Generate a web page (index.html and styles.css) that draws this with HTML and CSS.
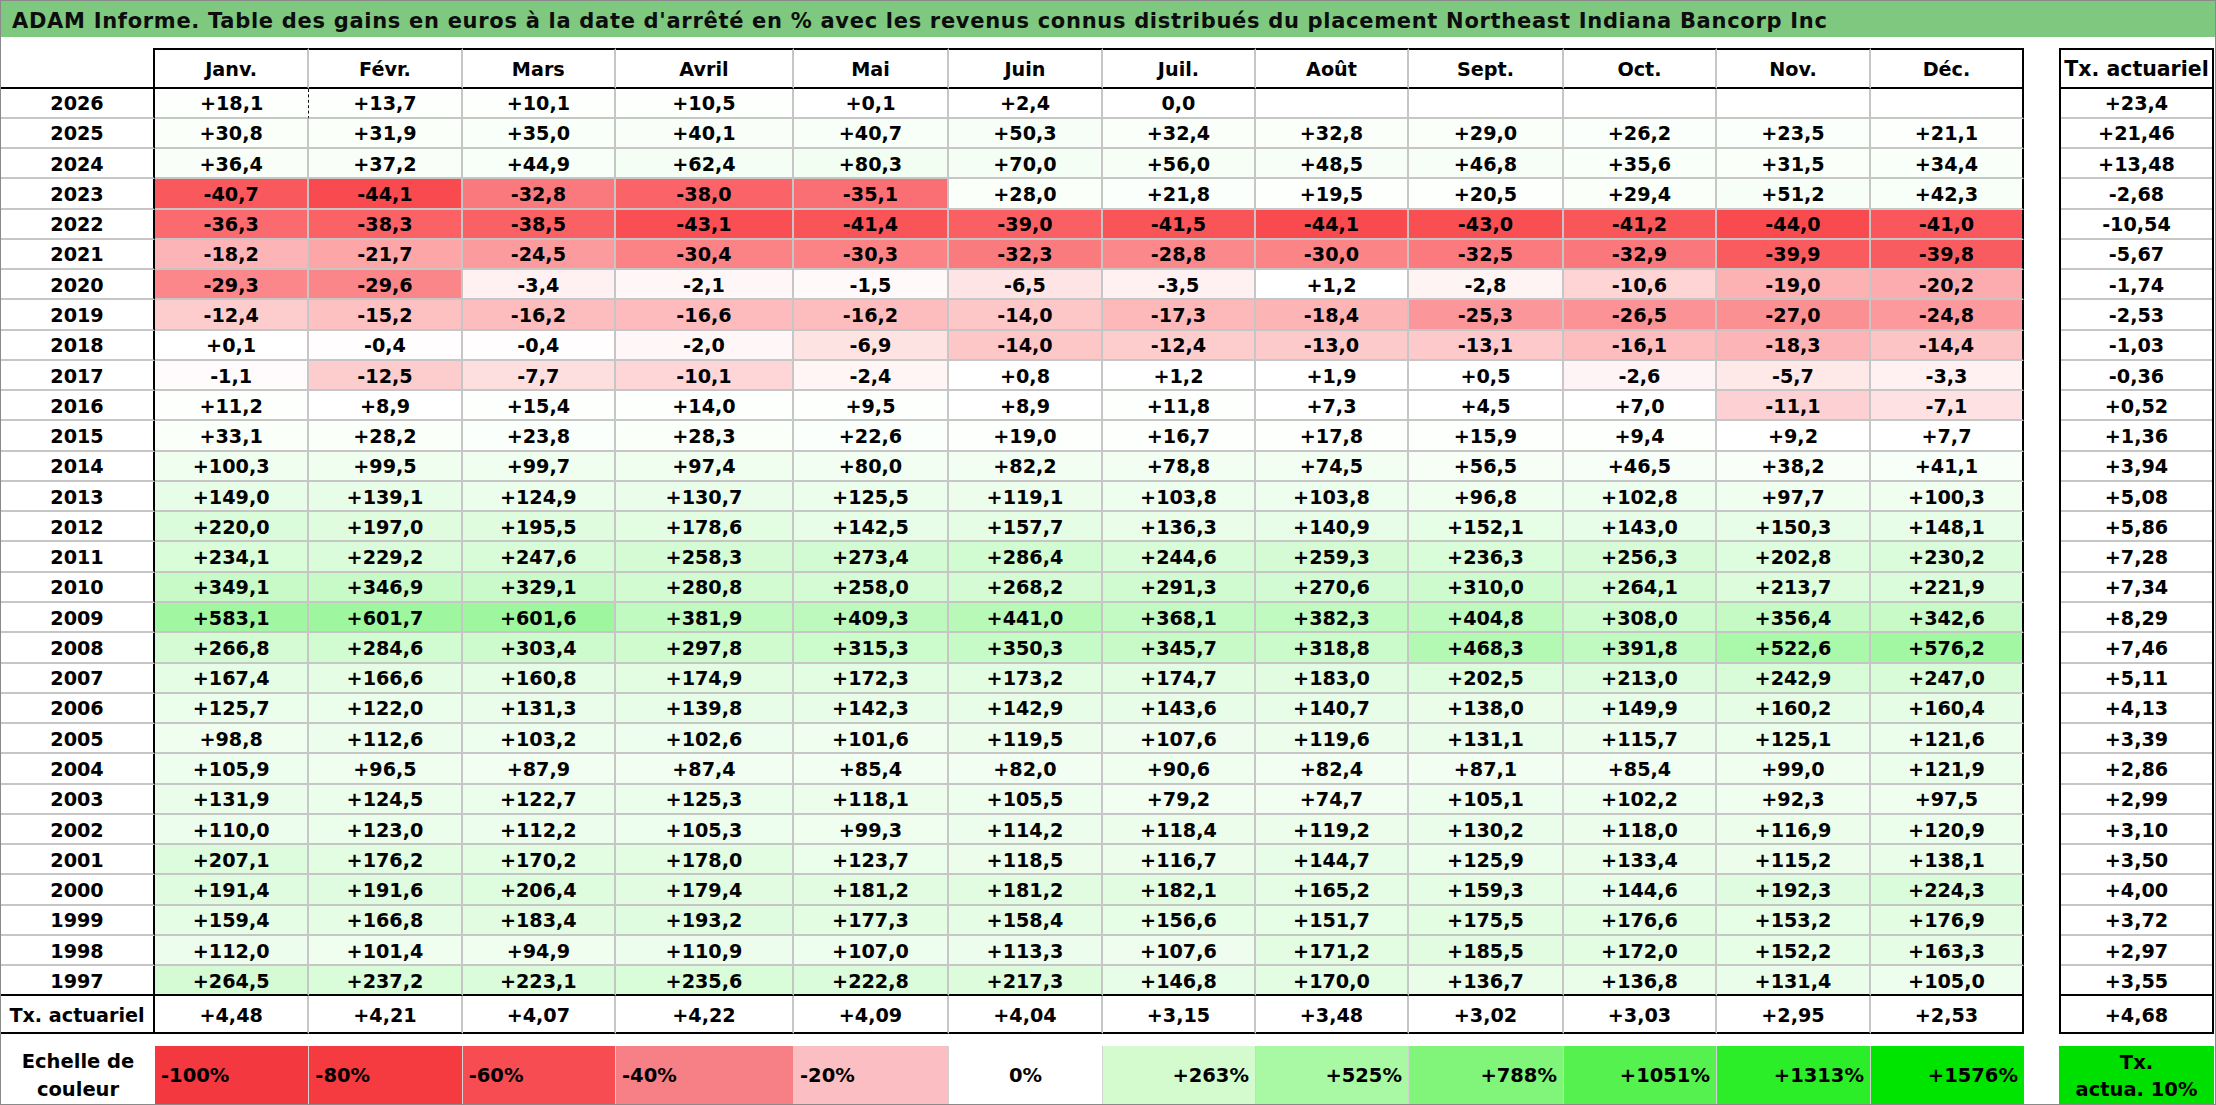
FILE: index.html
```html
<!DOCTYPE html>
<html lang="fr">
<head>
<meta charset="utf-8">
<title>ADAM Informe</title>
<link rel="stylesheet" href="styles.css">
</head>
<body>
<div class="page">
  <div class="title">ADAM Informe. Table des gains en euros à la date d'arrêté en % avec les revenus connus distribués du placement Northeast Indiana Bancorp Inc</div>
  <div class="sheet">
    <div class="main">
      <div class="row head"><div class="lab"></div><div>Janv.</div><div>Févr.</div><div>Mars</div><div>Avril</div><div>Mai</div><div>Juin</div><div>Juil.</div><div>Août</div><div>Sept.</div><div>Oct.</div><div>Nov.</div><div>Déc.</div></div>
      <div class="row"><div class="lab">2026</div><div class="v marq">+18,1</div><div class="v">+13,7</div><div class="v">+10,1</div><div class="v">+10,5</div><div class="v">+0,1</div><div class="v">+2,4</div><div class="v">0,0</div><div class="v"></div><div class="v"></div><div class="v"></div><div class="v"></div><div class="v"></div></div>
      <div class="row"><div class="lab">2025</div><div class="v">+30,8</div><div class="v">+31,9</div><div class="v">+35,0</div><div class="v">+40,1</div><div class="v">+40,7</div><div class="v">+50,3</div><div class="v">+32,4</div><div class="v">+32,8</div><div class="v">+29,0</div><div class="v">+26,2</div><div class="v">+23,5</div><div class="v">+21,1</div></div>
      <div class="row"><div class="lab">2024</div><div class="v">+36,4</div><div class="v">+37,2</div><div class="v">+44,9</div><div class="v">+62,4</div><div class="v">+80,3</div><div class="v">+70,0</div><div class="v">+56,0</div><div class="v">+48,5</div><div class="v">+46,8</div><div class="v">+35,6</div><div class="v">+31,5</div><div class="v">+34,4</div></div>
      <div class="row"><div class="lab">2023</div><div class="v">-40,7</div><div class="v">-44,1</div><div class="v">-32,8</div><div class="v">-38,0</div><div class="v">-35,1</div><div class="v">+28,0</div><div class="v">+21,8</div><div class="v">+19,5</div><div class="v">+20,5</div><div class="v">+29,4</div><div class="v">+51,2</div><div class="v">+42,3</div></div>
      <div class="row"><div class="lab">2022</div><div class="v">-36,3</div><div class="v">-38,3</div><div class="v">-38,5</div><div class="v">-43,1</div><div class="v">-41,4</div><div class="v">-39,0</div><div class="v">-41,5</div><div class="v">-44,1</div><div class="v">-43,0</div><div class="v">-41,2</div><div class="v">-44,0</div><div class="v">-41,0</div></div>
      <div class="row"><div class="lab">2021</div><div class="v">-18,2</div><div class="v">-21,7</div><div class="v">-24,5</div><div class="v">-30,4</div><div class="v">-30,3</div><div class="v">-32,3</div><div class="v">-28,8</div><div class="v">-30,0</div><div class="v">-32,5</div><div class="v">-32,9</div><div class="v">-39,9</div><div class="v">-39,8</div></div>
      <div class="row"><div class="lab">2020</div><div class="v">-29,3</div><div class="v">-29,6</div><div class="v">-3,4</div><div class="v">-2,1</div><div class="v">-1,5</div><div class="v">-6,5</div><div class="v">-3,5</div><div class="v">+1,2</div><div class="v">-2,8</div><div class="v">-10,6</div><div class="v">-19,0</div><div class="v">-20,2</div></div>
      <div class="row"><div class="lab">2019</div><div class="v">-12,4</div><div class="v">-15,2</div><div class="v">-16,2</div><div class="v">-16,6</div><div class="v">-16,2</div><div class="v">-14,0</div><div class="v">-17,3</div><div class="v">-18,4</div><div class="v">-25,3</div><div class="v">-26,5</div><div class="v">-27,0</div><div class="v">-24,8</div></div>
      <div class="row"><div class="lab">2018</div><div class="v">+0,1</div><div class="v">-0,4</div><div class="v">-0,4</div><div class="v">-2,0</div><div class="v">-6,9</div><div class="v">-14,0</div><div class="v">-12,4</div><div class="v">-13,0</div><div class="v">-13,1</div><div class="v">-16,1</div><div class="v">-18,3</div><div class="v">-14,4</div></div>
      <div class="row"><div class="lab">2017</div><div class="v">-1,1</div><div class="v">-12,5</div><div class="v">-7,7</div><div class="v">-10,1</div><div class="v">-2,4</div><div class="v">+0,8</div><div class="v">+1,2</div><div class="v">+1,9</div><div class="v">+0,5</div><div class="v">-2,6</div><div class="v">-5,7</div><div class="v">-3,3</div></div>
      <div class="row"><div class="lab">2016</div><div class="v">+11,2</div><div class="v">+8,9</div><div class="v">+15,4</div><div class="v">+14,0</div><div class="v">+9,5</div><div class="v">+8,9</div><div class="v">+11,8</div><div class="v">+7,3</div><div class="v">+4,5</div><div class="v">+7,0</div><div class="v">-11,1</div><div class="v">-7,1</div></div>
      <div class="row"><div class="lab">2015</div><div class="v">+33,1</div><div class="v">+28,2</div><div class="v">+23,8</div><div class="v">+28,3</div><div class="v">+22,6</div><div class="v">+19,0</div><div class="v">+16,7</div><div class="v">+17,8</div><div class="v">+15,9</div><div class="v">+9,4</div><div class="v">+9,2</div><div class="v">+7,7</div></div>
      <div class="row"><div class="lab">2014</div><div class="v">+100,3</div><div class="v">+99,5</div><div class="v">+99,7</div><div class="v">+97,4</div><div class="v">+80,0</div><div class="v">+82,2</div><div class="v">+78,8</div><div class="v">+74,5</div><div class="v">+56,5</div><div class="v">+46,5</div><div class="v">+38,2</div><div class="v">+41,1</div></div>
      <div class="row"><div class="lab">2013</div><div class="v">+149,0</div><div class="v">+139,1</div><div class="v">+124,9</div><div class="v">+130,7</div><div class="v">+125,5</div><div class="v">+119,1</div><div class="v">+103,8</div><div class="v">+103,8</div><div class="v">+96,8</div><div class="v">+102,8</div><div class="v">+97,7</div><div class="v">+100,3</div></div>
      <div class="row"><div class="lab">2012</div><div class="v">+220,0</div><div class="v">+197,0</div><div class="v">+195,5</div><div class="v">+178,6</div><div class="v">+142,5</div><div class="v">+157,7</div><div class="v">+136,3</div><div class="v">+140,9</div><div class="v">+152,1</div><div class="v">+143,0</div><div class="v">+150,3</div><div class="v">+148,1</div></div>
      <div class="row"><div class="lab">2011</div><div class="v">+234,1</div><div class="v">+229,2</div><div class="v">+247,6</div><div class="v">+258,3</div><div class="v">+273,4</div><div class="v">+286,4</div><div class="v">+244,6</div><div class="v">+259,3</div><div class="v">+236,3</div><div class="v">+256,3</div><div class="v">+202,8</div><div class="v">+230,2</div></div>
      <div class="row"><div class="lab">2010</div><div class="v">+349,1</div><div class="v">+346,9</div><div class="v">+329,1</div><div class="v">+280,8</div><div class="v">+258,0</div><div class="v">+268,2</div><div class="v">+291,3</div><div class="v">+270,6</div><div class="v">+310,0</div><div class="v">+264,1</div><div class="v">+213,7</div><div class="v">+221,9</div></div>
      <div class="row"><div class="lab">2009</div><div class="v">+583,1</div><div class="v">+601,7</div><div class="v">+601,6</div><div class="v">+381,9</div><div class="v">+409,3</div><div class="v">+441,0</div><div class="v">+368,1</div><div class="v">+382,3</div><div class="v">+404,8</div><div class="v">+308,0</div><div class="v">+356,4</div><div class="v">+342,6</div></div>
      <div class="row"><div class="lab">2008</div><div class="v">+266,8</div><div class="v">+284,6</div><div class="v">+303,4</div><div class="v">+297,8</div><div class="v">+315,3</div><div class="v">+350,3</div><div class="v">+345,7</div><div class="v">+318,8</div><div class="v">+468,3</div><div class="v">+391,8</div><div class="v">+522,6</div><div class="v">+576,2</div></div>
      <div class="row"><div class="lab">2007</div><div class="v">+167,4</div><div class="v">+166,6</div><div class="v">+160,8</div><div class="v">+174,9</div><div class="v">+172,3</div><div class="v">+173,2</div><div class="v">+174,7</div><div class="v">+183,0</div><div class="v">+202,5</div><div class="v">+213,0</div><div class="v">+242,9</div><div class="v">+247,0</div></div>
      <div class="row"><div class="lab">2006</div><div class="v">+125,7</div><div class="v">+122,0</div><div class="v">+131,3</div><div class="v">+139,8</div><div class="v">+142,3</div><div class="v">+142,9</div><div class="v">+143,6</div><div class="v">+140,7</div><div class="v">+138,0</div><div class="v">+149,9</div><div class="v">+160,2</div><div class="v">+160,4</div></div>
      <div class="row"><div class="lab">2005</div><div class="v">+98,8</div><div class="v">+112,6</div><div class="v">+103,2</div><div class="v">+102,6</div><div class="v">+101,6</div><div class="v">+119,5</div><div class="v">+107,6</div><div class="v">+119,6</div><div class="v">+131,1</div><div class="v">+115,7</div><div class="v">+125,1</div><div class="v">+121,6</div></div>
      <div class="row"><div class="lab">2004</div><div class="v">+105,9</div><div class="v">+96,5</div><div class="v">+87,9</div><div class="v">+87,4</div><div class="v">+85,4</div><div class="v">+82,0</div><div class="v">+90,6</div><div class="v">+82,4</div><div class="v">+87,1</div><div class="v">+85,4</div><div class="v">+99,0</div><div class="v">+121,9</div></div>
      <div class="row"><div class="lab">2003</div><div class="v">+131,9</div><div class="v">+124,5</div><div class="v">+122,7</div><div class="v">+125,3</div><div class="v">+118,1</div><div class="v">+105,5</div><div class="v">+79,2</div><div class="v">+74,7</div><div class="v">+105,1</div><div class="v">+102,2</div><div class="v">+92,3</div><div class="v">+97,5</div></div>
      <div class="row"><div class="lab">2002</div><div class="v">+110,0</div><div class="v">+123,0</div><div class="v">+112,2</div><div class="v">+105,3</div><div class="v">+99,3</div><div class="v">+114,2</div><div class="v">+118,4</div><div class="v">+119,2</div><div class="v">+130,2</div><div class="v">+118,0</div><div class="v">+116,9</div><div class="v">+120,9</div></div>
      <div class="row"><div class="lab">2001</div><div class="v">+207,1</div><div class="v">+176,2</div><div class="v">+170,2</div><div class="v">+178,0</div><div class="v">+123,7</div><div class="v">+118,5</div><div class="v">+116,7</div><div class="v">+144,7</div><div class="v">+125,9</div><div class="v">+133,4</div><div class="v">+115,2</div><div class="v">+138,1</div></div>
      <div class="row"><div class="lab">2000</div><div class="v">+191,4</div><div class="v">+191,6</div><div class="v">+206,4</div><div class="v">+179,4</div><div class="v">+181,2</div><div class="v">+181,2</div><div class="v">+182,1</div><div class="v">+165,2</div><div class="v">+159,3</div><div class="v">+144,6</div><div class="v">+192,3</div><div class="v">+224,3</div></div>
      <div class="row"><div class="lab">1999</div><div class="v">+159,4</div><div class="v">+166,8</div><div class="v">+183,4</div><div class="v">+193,2</div><div class="v">+177,3</div><div class="v">+158,4</div><div class="v">+156,6</div><div class="v">+151,7</div><div class="v">+175,5</div><div class="v">+176,6</div><div class="v">+153,2</div><div class="v">+176,9</div></div>
      <div class="row"><div class="lab">1998</div><div class="v">+112,0</div><div class="v">+101,4</div><div class="v">+94,9</div><div class="v">+110,9</div><div class="v">+107,0</div><div class="v">+113,3</div><div class="v">+107,6</div><div class="v">+171,2</div><div class="v">+185,5</div><div class="v">+172,0</div><div class="v">+152,2</div><div class="v">+163,3</div></div>
      <div class="row end"><div class="lab">1997</div><div class="v">+264,5</div><div class="v">+237,2</div><div class="v">+223,1</div><div class="v">+235,6</div><div class="v">+222,8</div><div class="v">+217,3</div><div class="v">+146,8</div><div class="v">+170,0</div><div class="v">+136,7</div><div class="v">+136,8</div><div class="v">+131,4</div><div class="v">+105,0</div></div>
      <div class="row end"><div class="lab">Tx. actuariel</div><div>+4,48</div><div>+4,21</div><div>+4,07</div><div>+4,22</div><div>+4,09</div><div>+4,04</div><div>+3,15</div><div>+3,48</div><div>+3,02</div><div>+3,03</div><div>+2,95</div><div>+2,53</div></div>
    </div>
    <div class="side">
      <div class="sh">Tx. actuariel</div>
      <div>+23,4</div><div>+21,46</div><div>+13,48</div><div>-2,68</div><div>-10,54</div><div>-5,67</div><div>-1,74</div><div>-2,53</div><div>-1,03</div><div>-0,36</div>
      <div>+0,52</div><div>+1,36</div><div>+3,94</div><div>+5,08</div><div>+5,86</div><div>+7,28</div><div>+7,34</div><div>+8,29</div><div>+7,46</div><div>+5,11</div>
      <div>+4,13</div><div>+3,39</div><div>+2,86</div><div>+2,99</div><div>+3,10</div><div>+3,50</div><div>+4,00</div><div>+3,72</div><div>+2,97</div><div class="end">+3,55</div>
      <div class="end">+4,68</div>
    </div>
  </div>
  <div class="legend">
    <div class="leg-main">
      <div class="leg-lab">Echelle de<br>couleur</div>
      <div class="lg neg s1">-100%</div>
      <div class="lg neg s2">-80%</div>
      <div class="lg neg s3">-60%</div>
      <div class="lg neg s4">-40%</div>
      <div class="lg neg s5">-20%</div>
      <div class="lg zero s6">0%</div>
      <div class="lg pos s7">+263%</div>
      <div class="lg pos s8">+525%</div>
      <div class="lg pos s9">+788%</div>
      <div class="lg pos s10">+1051%</div>
      <div class="lg pos s11">+1313%</div>
      <div class="lg pos s12">+1576%</div>
    </div>
    <div class="leg-side">Tx.<br>actua. 10%</div>
  </div>
</div>
<script src="app.js"></script>
</body>
</html>
```

FILE: styles.css
```css
* { box-sizing: border-box; }
html, body { margin: 0; padding: 0; background: #fff; }
body {
  font-family: "DejaVu Sans", "Liberation Sans", sans-serif;
  font-weight: 700;
  font-size: 19.2px;
  color: #000;
}
.page {
  width: 2216px;
  height: 1105px;
  border: 1px solid #8a8a8a;
  overflow: hidden;
}
.title {
  height: 36px;
  background: #7ec87f;
  padding: 8px 0 0 11px;
  font-size: 21px;
  letter-spacing: 0.7px;
  white-space: nowrap;
  color: #0d0d0d;
}
.sheet {
  display: flex;
  gap: 35px;
  margin-top: 11px;
}
.main, .leg-main {
  display: grid;
  grid-template-columns: 154px 154.3px 153.4px 153.3px 178px 155px 154px 153px 153px 155px 153px 154px 153px;
}
.main, .side {
  grid-template-rows: 40.5px repeat(30, 30.27px) 37.6px;
}
.row { display: contents; }
.main .row > div {
  display: flex;
  align-items: center;
  justify-content: center;
  padding-top: 2px;
  white-space: nowrap;
  border-right: 2px solid #c6c6c6;
  border-bottom: 2px solid #c6c6c6;
}
.main .row > .lab { border-right-color: #000; }
.main .row > div:last-child { border-right-color: #000; }
.main .head > div { border-top: 2px solid #000; border-bottom-color: #000; }
.main .head > .lab { border-top: 0; }
.main .row.end > div { border-bottom-color: #000; }
.main .row > .marq { border-right: 1px dashed #111; }

.side {
  display: grid;
  width: 155px;
  border-left: 2px solid #000;
  border-right: 2px solid #000;
}
.side > div {
  display: flex;
  align-items: center;
  justify-content: center;
  padding-top: 2px;
  white-space: nowrap;
  border-bottom: 2px solid #c6c6c6;
}
.side > .sh {
  border-top: 2px solid #000;
  border-bottom-color: #000;
  font-size: 20.5px;
}
.side > .end { border-bottom-color: #000; }

.legend {
  display: flex;
  gap: 35px;
  margin-top: 11.8px;
  height: 58px;
}
.leg-main { grid-template-rows: 58px; }
.leg-lab {
  display: flex;
  align-items: center;
  justify-content: center;
  text-align: center;
  line-height: 28px;
  font-size: 19.5px;
  padding-top: 2px;
}
.lg {
  display: flex;
  align-items: center;
  padding: 2px 6px 0;
  font-size: 19.5px;
  border-right: 1px solid #d2d2d2;
  white-space: nowrap;
}
.lg.neg { justify-content: flex-start; }
.lg.zero { justify-content: center; }
.lg.pos { justify-content: flex-end; }
.s1 { background: #f4383f; }
.s2 { background: #f53a40; }
.s3 { background: #f64c52; }
.s4 { background: #f78086; }
.s5 { background: #fbbec2; }
.s6 { background: #ffffff; }
.s7 { background: #d3fbce; }
.s8 { background: #a9f8a3; }
.s9 { background: #80f57a; }
.s10 { background: #55f24f; }
.s11 { background: #2cee28; }
.s12 { background: #00e500; border-right: 0; }
.leg-side {
  width: 155px;
  background: #00e000;
  display: flex;
  align-items: center;
  justify-content: center;
  text-align: center;
  line-height: 27px;
  font-size: 19.5px;
  padding-top: 2px;
}
```

FILE: app.js
```js
(function () {
  var cells = document.querySelectorAll('.main .v');
  for (var i = 0; i < cells.length; i++) {
    var el = cells[i];
    var t = el.textContent.trim();
    if (!t) continue;
    var v = parseFloat(t.replace(',', '.'));
    var r, g, b, k;
    if (v < 0) {
      k = Math.min(1, -v / 50);
      r = 255 - 7 * k;
      g = 255 - 205 * k;
      b = 255 - 200 * k;
    } else {
      k = Math.min(1, v / 1576);
      r = 255 - 255 * k;
      g = 255 - 22 * k;
      b = 255 - 255 * k;
    }
    el.style.backgroundColor = 'rgb(' + Math.round(r) + ',' + Math.round(g) + ',' + Math.round(b) + ')';
  }
})();
```
